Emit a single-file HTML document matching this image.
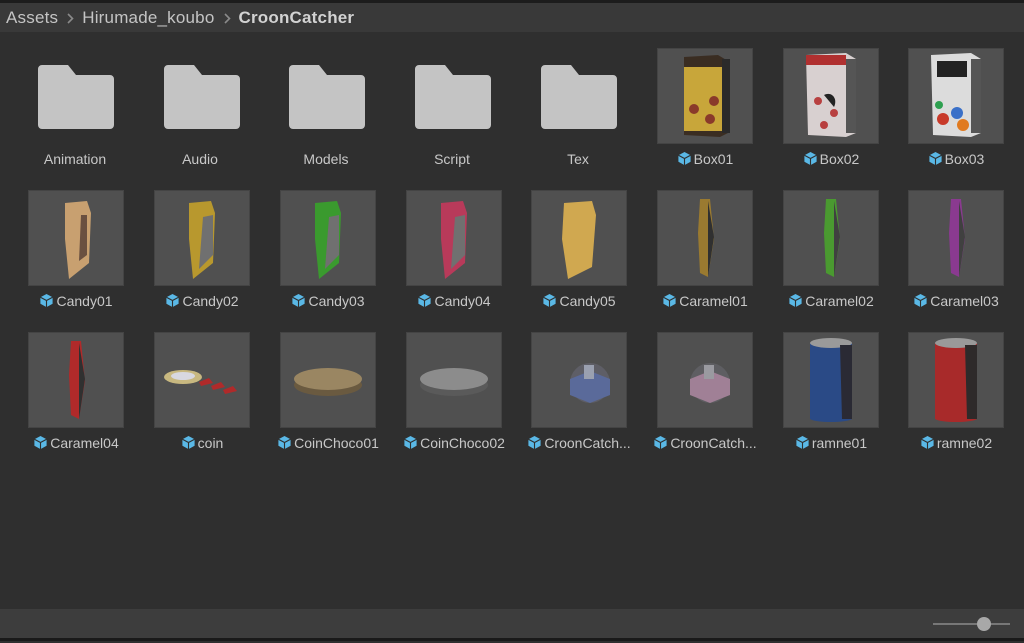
<!DOCTYPE html>
<html><head><meta charset="utf-8"><style>
*{margin:0;padding:0;box-sizing:border-box}
body{width:1024px;height:641px;background:#2f2f2f;font-family:"Liberation Sans",sans-serif;overflow:hidden;position:relative}
.top{position:absolute;left:0;top:0;width:1024px;height:3px;background:#1c1c1c}
.hdr{position:absolute;left:0;top:3px;width:1024px;height:29px;background:#393939;color:#c4c4c4;font-size:17px;line-height:29px;padding-left:6px;letter-spacing:0.2px}
.hdr b{color:#d2d2d2}
.hdr svg{margin:0 8px 0 9px;vertical-align:-1px}
.it{position:absolute;width:96px}
.th{width:96px;height:96px;background:#505050;border:1px solid #444;overflow:hidden}
.lb{position:absolute;left:-20px;width:136px;text-align:center;color:#c8c8c8;font-size:14px;white-space:nowrap;top:103px}
.lb svg{vertical-align:-2px;margin-right:2px}
.foot{position:absolute;left:0;top:609px;width:1024px;height:29px;background:#3d3d3d}
.bot{position:absolute;left:0;top:638px;width:1024px;height:3px;background:#1a1a1a}
</style></head><body>
<div class="top"></div>
<div class="hdr">Assets<svg width="7" height="11"><path d="M1 1l4.5 4.5L1 10" stroke="#8a8a8a" stroke-width="1.6" fill="none"/></svg>Hirumade_koubo<svg width="7" height="11"><path d="M1 1l4.5 4.5L1 10" stroke="#8a8a8a" stroke-width="1.6" fill="none"/></svg><b>CroonCatcher</b></div>

<svg style="position:absolute;left:0;top:0" width="1024" height="200">
<defs><path id="f" d="M4 0h26l8 10h34a4 4 0 0 1 4 4v46a4 4 0 0 1-4 4h-68a4 4 0 0 1-4-4v-56a4 4 0 0 1 4-4z" fill="#c4c4c4"/></defs>
<use href="#f" x="38" y="65"/><use href="#f" x="164" y="65"/><use href="#f" x="289" y="65"/><use href="#f" x="415" y="65"/><use href="#f" x="541" y="65"/>
<g fill="#c8c8c8" font-size="14" text-anchor="middle" font-family="Liberation Sans">
<text x="75" y="164">Animation</text><text x="200" y="164">Audio</text><text x="326" y="164">Models</text><text x="452" y="164">Script</text><text x="578" y="164">Tex</text></g>
</svg>

<div class="it" style="left:657px;top:48px"><div class="th"><svg width="96" height="96"><path d="M26 8l34-2 10 6v72l-8 4-36-2z" fill="#3a2d22"/><rect x="26" y="18" width="38" height="64" fill="#c8a63a"/><circle cx="36" cy="60" r="5" fill="#8a3a2a"/><circle cx="52" cy="70" r="5" fill="#8a3a2a"/><circle cx="56" cy="52" r="5" fill="#8a3a2a"/><rect x="64" y="10" width="8" height="74" fill="#2a2a2a"/></svg></div><div class="lb"><svg width="15" height="15" viewBox="0 0 16 16"><path d="M8 1l6.5 3.5v7L8 15l-6.5-3.5v-7z" fill="#5ab8e6"/><path d="M8 8l6.5-3.5M8 8v7M8 8L1.5 4.5" stroke="#2f2f2f" stroke-width="1.2"/></svg>Box01</div></div>
<div class="it" style="left:783px;top:48px"><div class="th"><svg width="96" height="96"><path d="M22 6l40-2 10 6v74l-10 4-38-2z" fill="#d8d0d0"/><rect x="22" y="6" width="40" height="10" fill="#b03030"/><circle cx="34" cy="52" r="4" fill="#b84040"/><circle cx="50" cy="64" r="4" fill="#b84040"/><circle cx="40" cy="76" r="4" fill="#b84040"/><path d="M40 46c8-4 14 4 10 12z" fill="#222"/><rect x="62" y="10" width="10" height="74" fill="#555"/></svg></div><div class="lb"><svg width="15" height="15" viewBox="0 0 16 16"><path d="M8 1l6.5 3.5v7L8 15l-6.5-3.5v-7z" fill="#5ab8e6"/><path d="M8 8l6.5-3.5M8 8v7M8 8L1.5 4.5" stroke="#2f2f2f" stroke-width="1.2"/></svg>Box02</div></div>
<div class="it" style="left:908px;top:48px"><div class="th"><svg width="96" height="96"><path d="M22 6l40-2 10 6v74l-10 4-38-2z" fill="#dcdcdc"/><rect x="28" y="12" width="30" height="16" fill="#222"/><circle cx="34" cy="70" r="6" fill="#c83a2a"/><circle cx="48" cy="64" r="6" fill="#3a70c8"/><circle cx="54" cy="76" r="6" fill="#e07a20"/><circle cx="30" cy="56" r="4" fill="#2ea050"/><rect x="62" y="10" width="10" height="74" fill="#555"/></svg></div><div class="lb"><svg width="15" height="15" viewBox="0 0 16 16"><path d="M8 1l6.5 3.5v7L8 15l-6.5-3.5v-7z" fill="#5ab8e6"/><path d="M8 8l6.5-3.5M8 8v7M8 8L1.5 4.5" stroke="#2f2f2f" stroke-width="1.2"/></svg>Box03</div></div>

<div class="it" style="left:28px;top:190px"><div class="th"><svg width="96" height="96"><path d="M36 12l22-2 4 12-2 50-20 16-4-40z" fill="#c8a070"/><path d="M52 24l6 0 0 40-8 6z" fill="#6a5040"/></svg></div><div class="lb"><svg width="15" height="15" viewBox="0 0 16 16"><path d="M8 1l6.5 3.5v7L8 15l-6.5-3.5v-7z" fill="#5ab8e6"/><path d="M8 8l6.5-3.5M8 8v7M8 8L1.5 4.5" stroke="#2f2f2f" stroke-width="1.2"/></svg>Candy01</div></div>
<div class="it" style="left:154px;top:190px"><div class="th"><svg width="96" height="96"><path d="M34 12l22-2 4 12-2 50-20 16-4-40z" fill="#b8982e"/><path d="M48 26l10-2 0 40-14 14z" fill="#707070"/></svg></div><div class="lb"><svg width="15" height="15" viewBox="0 0 16 16"><path d="M8 1l6.5 3.5v7L8 15l-6.5-3.5v-7z" fill="#5ab8e6"/><path d="M8 8l6.5-3.5M8 8v7M8 8L1.5 4.5" stroke="#2f2f2f" stroke-width="1.2"/></svg>Candy02</div></div>
<div class="it" style="left:280px;top:190px"><div class="th"><svg width="96" height="96"><path d="M34 12l22-2 4 12-2 50-20 16-4-40z" fill="#3a9a2e"/><path d="M48 26l10-2 0 40-14 14z" fill="#707070"/></svg></div><div class="lb"><svg width="15" height="15" viewBox="0 0 16 16"><path d="M8 1l6.5 3.5v7L8 15l-6.5-3.5v-7z" fill="#5ab8e6"/><path d="M8 8l6.5-3.5M8 8v7M8 8L1.5 4.5" stroke="#2f2f2f" stroke-width="1.2"/></svg>Candy03</div></div>
<div class="it" style="left:406px;top:190px"><div class="th"><svg width="96" height="96"><path d="M34 12l22-2 4 12-2 50-20 16-4-40z" fill="#b83a5a"/><path d="M48 26l10-2 0 40-14 14z" fill="#707070"/></svg></div><div class="lb"><svg width="15" height="15" viewBox="0 0 16 16"><path d="M8 1l6.5 3.5v7L8 15l-6.5-3.5v-7z" fill="#5ab8e6"/><path d="M8 8l6.5-3.5M8 8v7M8 8L1.5 4.5" stroke="#2f2f2f" stroke-width="1.2"/></svg>Candy04</div></div>
<div class="it" style="left:531px;top:190px"><div class="th"><svg width="96" height="96"><path d="M32 12l28-2 4 14-4 52-24 12-6-40z" fill="#d0a850"/></svg></div><div class="lb"><svg width="15" height="15" viewBox="0 0 16 16"><path d="M8 1l6.5 3.5v7L8 15l-6.5-3.5v-7z" fill="#5ab8e6"/><path d="M8 8l6.5-3.5M8 8v7M8 8L1.5 4.5" stroke="#2f2f2f" stroke-width="1.2"/></svg>Candy05</div></div>
<div class="it" style="left:657px;top:190px"><div class="th"><svg width="96" height="96"><path d="M42 8l10 0 4 40-6 38-8-4-2-40z" fill="#9a7a30"/><path d="M50 10l6 36-6 40z" fill="#303030"/></svg></div><div class="lb"><svg width="15" height="15" viewBox="0 0 16 16"><path d="M8 1l6.5 3.5v7L8 15l-6.5-3.5v-7z" fill="#5ab8e6"/><path d="M8 8l6.5-3.5M8 8v7M8 8L1.5 4.5" stroke="#2f2f2f" stroke-width="1.2"/></svg>Caramel01</div></div>
<div class="it" style="left:783px;top:190px"><div class="th"><svg width="96" height="96"><path d="M42 8l10 0 4 40-6 38-8-4-2-40z" fill="#4a9a30"/><path d="M50 10l6 36-6 40z" fill="#404040"/></svg></div><div class="lb"><svg width="15" height="15" viewBox="0 0 16 16"><path d="M8 1l6.5 3.5v7L8 15l-6.5-3.5v-7z" fill="#5ab8e6"/><path d="M8 8l6.5-3.5M8 8v7M8 8L1.5 4.5" stroke="#2f2f2f" stroke-width="1.2"/></svg>Caramel02</div></div>
<div class="it" style="left:908px;top:190px"><div class="th"><svg width="96" height="96"><path d="M42 8l10 0 4 40-6 38-8-4-2-40z" fill="#8a3a90"/><path d="M50 10l6 36-6 40z" fill="#404040"/></svg></div><div class="lb"><svg width="15" height="15" viewBox="0 0 16 16"><path d="M8 1l6.5 3.5v7L8 15l-6.5-3.5v-7z" fill="#5ab8e6"/><path d="M8 8l6.5-3.5M8 8v7M8 8L1.5 4.5" stroke="#2f2f2f" stroke-width="1.2"/></svg>Caramel03</div></div>

<div class="it" style="left:28px;top:332px"><div class="th"><svg width="96" height="96"><path d="M42 8l10 0 4 40-6 38-8-4-2-40z" fill="#b02a2a"/><path d="M50 10l6 36-6 40z" fill="#303030"/></svg></div><div class="lb"><svg width="15" height="15" viewBox="0 0 16 16"><path d="M8 1l6.5 3.5v7L8 15l-6.5-3.5v-7z" fill="#5ab8e6"/><path d="M8 8l6.5-3.5M8 8v7M8 8L1.5 4.5" stroke="#2f2f2f" stroke-width="1.2"/></svg>Caramel04</div></div>
<div class="it" style="left:154px;top:332px"><div class="th"><svg width="96" height="96"><ellipse cx="28" cy="44" rx="19" ry="7" fill="#c8b880"/><ellipse cx="28" cy="43" rx="12" ry="4" fill="#d8d8e0"/><path d="M44 49l10-4 4 5-12 3z M56 53l10-4 4 5-12 3z M68 57l10-4 4 5-12 3z" fill="#b02a2a"/></svg></div><div class="lb"><svg width="15" height="15" viewBox="0 0 16 16"><path d="M8 1l6.5 3.5v7L8 15l-6.5-3.5v-7z" fill="#5ab8e6"/><path d="M8 8l6.5-3.5M8 8v7M8 8L1.5 4.5" stroke="#2f2f2f" stroke-width="1.2"/></svg>coin</div></div>
<div class="it" style="left:280px;top:332px"><div class="th"><svg width="96" height="96"><ellipse cx="47" cy="52" rx="34" ry="11" fill="#6a5a40"/><ellipse cx="47" cy="46" rx="34" ry="11" fill="#9a8662"/></svg></div><div class="lb"><svg width="15" height="15" viewBox="0 0 16 16"><path d="M8 1l6.5 3.5v7L8 15l-6.5-3.5v-7z" fill="#5ab8e6"/><path d="M8 8l6.5-3.5M8 8v7M8 8L1.5 4.5" stroke="#2f2f2f" stroke-width="1.2"/></svg>CoinChoco01</div></div>
<div class="it" style="left:406px;top:332px"><div class="th"><svg width="96" height="96"><ellipse cx="47" cy="52" rx="34" ry="11" fill="#5a5a5a"/><ellipse cx="47" cy="46" rx="34" ry="11" fill="#8c8c8c"/></svg></div><div class="lb"><svg width="15" height="15" viewBox="0 0 16 16"><path d="M8 1l6.5 3.5v7L8 15l-6.5-3.5v-7z" fill="#5ab8e6"/><path d="M8 8l6.5-3.5M8 8v7M8 8L1.5 4.5" stroke="#2f2f2f" stroke-width="1.2"/></svg>CoinChoco02</div></div>
<div class="it" style="left:531px;top:332px"><div class="th"><svg width="96" height="96"><circle cx="58" cy="50" r="20" fill="#5e5e66"/><path d="M38 46l20-8 20 8v16l-20 8-20-8z" fill="#5a6a9a"/><rect x="52" y="32" width="10" height="14" fill="#9aa0b0"/></svg></div><div class="lb"><svg width="15" height="15" viewBox="0 0 16 16"><path d="M8 1l6.5 3.5v7L8 15l-6.5-3.5v-7z" fill="#5ab8e6"/><path d="M8 8l6.5-3.5M8 8v7M8 8L1.5 4.5" stroke="#2f2f2f" stroke-width="1.2"/></svg>CroonCatch...</div></div>
<div class="it" style="left:657px;top:332px"><div class="th"><svg width="96" height="96"><circle cx="52" cy="50" r="20" fill="#5e5e62"/><path d="M32 46l20-8 20 8v16l-20 8-20-8z" fill="#a08096"/><rect x="46" y="32" width="10" height="14" fill="#9a9aa0"/></svg></div><div class="lb"><svg width="15" height="15" viewBox="0 0 16 16"><path d="M8 1l6.5 3.5v7L8 15l-6.5-3.5v-7z" fill="#5ab8e6"/><path d="M8 8l6.5-3.5M8 8v7M8 8L1.5 4.5" stroke="#2f2f2f" stroke-width="1.2"/></svg>CroonCatch...</div></div>
<div class="it" style="left:783px;top:332px"><div class="th"><svg width="96" height="96"><path d="M26 10h42v76c-6 4-36 4-42 0z" fill="#2a4a86"/><ellipse cx="47" cy="10" rx="21" ry="5" fill="#9a9a9a"/><path d="M56 12h12v74h-10z" fill="#2a2a34"/></svg></div><div class="lb"><svg width="15" height="15" viewBox="0 0 16 16"><path d="M8 1l6.5 3.5v7L8 15l-6.5-3.5v-7z" fill="#5ab8e6"/><path d="M8 8l6.5-3.5M8 8v7M8 8L1.5 4.5" stroke="#2f2f2f" stroke-width="1.2"/></svg>ramne01</div></div>
<div class="it" style="left:908px;top:332px"><div class="th"><svg width="96" height="96"><path d="M26 10h42v76c-6 4-36 4-42 0z" fill="#a82a2a"/><ellipse cx="47" cy="10" rx="21" ry="5" fill="#9a9a9a"/><path d="M56 12h12v74h-10z" fill="#2e2a2a"/></svg></div><div class="lb"><svg width="15" height="15" viewBox="0 0 16 16"><path d="M8 1l6.5 3.5v7L8 15l-6.5-3.5v-7z" fill="#5ab8e6"/><path d="M8 8l6.5-3.5M8 8v7M8 8L1.5 4.5" stroke="#2f2f2f" stroke-width="1.2"/></svg>ramne02</div></div>

<div class="foot"><svg width="1024" height="29"><rect x="933" y="14" width="77" height="2" fill="#777"/><circle cx="984" cy="15" r="7" fill="#a8a8a8"/></svg></div>
<div class="bot"></div>
</body></html>
